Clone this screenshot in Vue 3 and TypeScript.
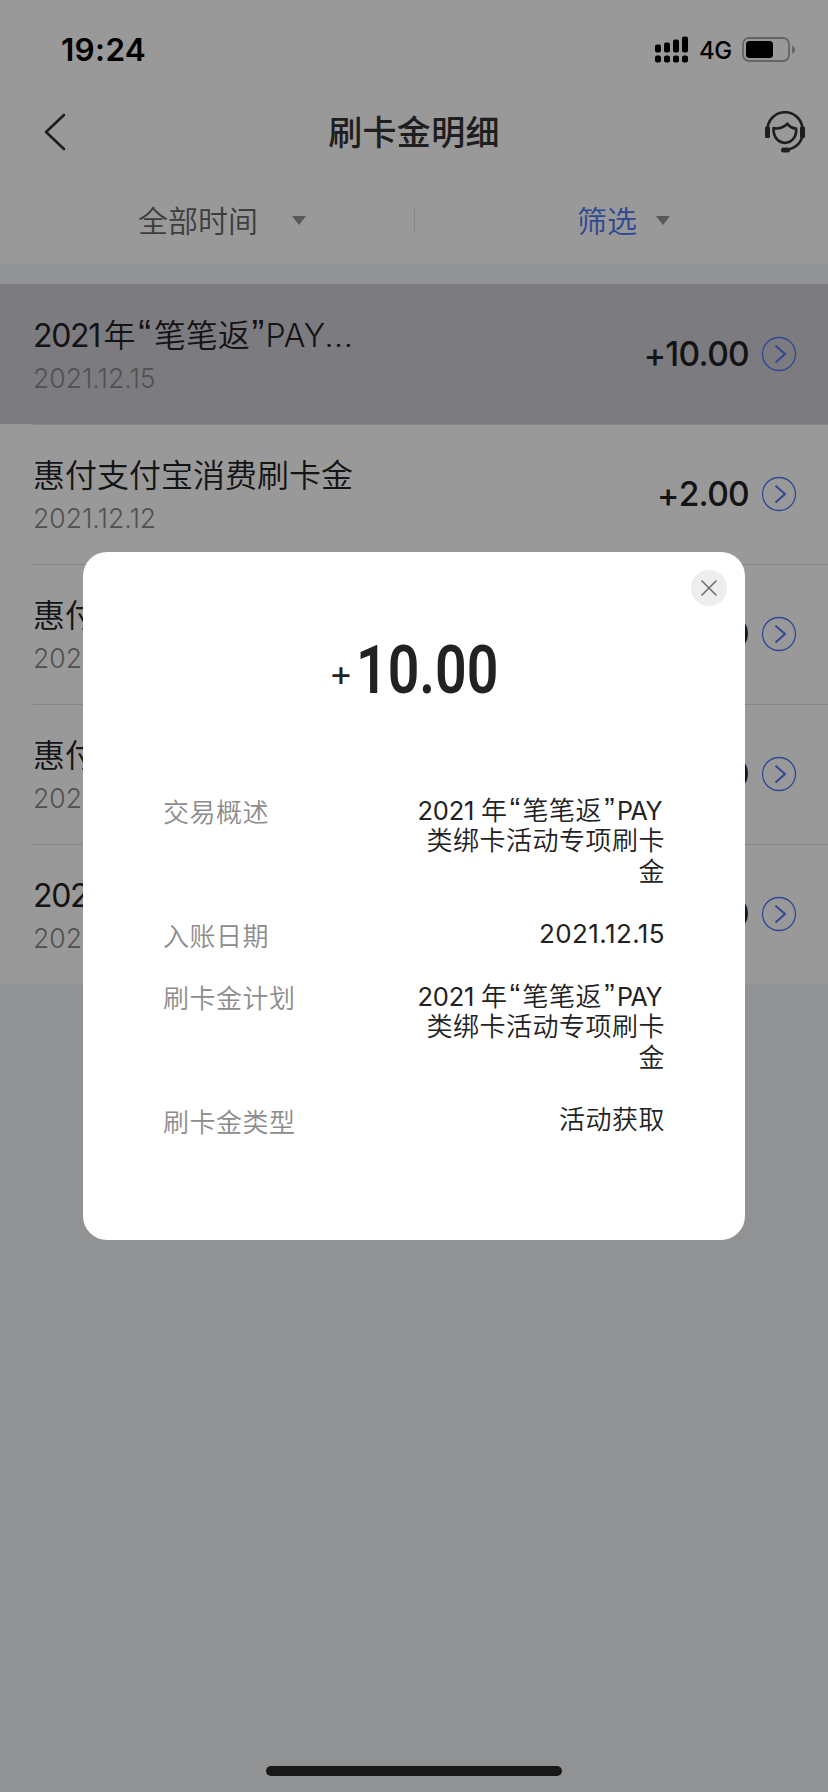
<script setup lang="ts">
interface Seg { t: string; k: 'cjk' | 'num' | 'year' | 'quote-open' | 'quote-end' | 'word' }
interface Entry { title: Seg[]; date: string; amount: string; active?: boolean }
interface Detail { label: string; lines: Seg[][] }

const cjk = (t: string): Seg => ({ t, k: 'cjk' })
const num = (t: string): Seg => ({ t, k: 'num' })
const year: Seg = { t: '2021', k: 'year' }
const campaign: Seg[] = [
  year, cjk('年'), { t: '“', k: 'quote-open' }, cjk('笔笔返'), { t: '”', k: 'quote-end' },
]

const entries: Entry[] = [
  { title: [...campaign, { t: 'PAY...', k: 'word' }], date: '2021.12.15', amount: '10.00', active: true },
  { title: [cjk('惠付支付宝消费刷卡金')], date: '2021.12.12', amount: '2.00' },
  { title: [cjk('惠付')], date: '2021', amount: '0' },
  { title: [cjk('惠付')], date: '2021', amount: '0' },
  { title: [year], date: '2021', amount: '0' },
]

const campaignLines: Seg[][] = [
  [...campaign, { t: 'PAY', k: 'word' }],
  [cjk('类绑卡活动专项刷卡')],
  [cjk('金')],
]

const details: Detail[] = [
  { label: '交易概述', lines: campaignLines },
  { label: '入账日期', lines: [[num('2021.12.15')]] },
  { label: '刷卡金计划', lines: campaignLines },
  { label: '刷卡金类型', lines: [[cjk('活动获取')]] },
]
</script>

<template>
  <div class="screen">
    <header class="top">
      <div class="status">
        <span class="clock">19:24</span>
        <div class="indicators">
          <svg class="signal" width="34" height="27" viewBox="0 0 34 27">
            <rect x="0" y="8.5" width="6" height="8" rx="2" />
            <rect x="9" y="6.5" width="6" height="10" rx="2" />
            <rect x="18" y="3.5" width="6" height="13" rx="2" />
            <rect x="27" y="0.5" width="6" height="16" rx="2" />
            <rect x="0" y="19.5" width="6" height="7" rx="2" />
            <rect x="9" y="19.5" width="6" height="7" rx="2" />
            <rect x="18" y="19.5" width="6" height="7" rx="2" />
            <rect x="27" y="19.5" width="6" height="7" rx="2" />
          </svg>
          <span class="network">4G</span>
          <svg class="battery" width="54" height="26" viewBox="0 0 54 26">
            <rect x="1" y="1" width="46" height="23" rx="6" fill="none" stroke="#a8a8a8" stroke-width="1.8" />
            <rect x="4" y="4" width="27" height="17" rx="3.5" />
            <path d="M50.2 8.5 Q53 10 53 12.7 Q53 15.500 50.2 17 Z" fill="#a0a0a0" />
          </svg>
        </div>
      </div>
      <nav class="nav">
        <svg class="back" width="24" height="40" viewBox="0 0 24 40">
          <path d="M21 3 L3 20 L21 37" fill="none" stroke="#333" stroke-width="2.6" stroke-linecap="round" stroke-linejoin="round" />
        </svg>
        <h1>刷卡金明细</h1>
        <svg class="service" width="42" height="42" viewBox="0 0 42 42">
          <g fill="none" stroke="#333" stroke-width="2.700">
            <path d="M3.500 17 A17.600 17.600 0 0 1 38.500 17" />
            <path d="M38.500 25 C36.500 33 30 38.500 21 38.700" />
            <path d="M9.600 17.200 C15 18.200 19 17 23.400 12.800 C26 16 28.500 17.200 32 17.600 C33.200 25 28 31.800 20.800 31.800 C13.600 31.800 9 25 9.600 17.200 Z" stroke-linejoin="round" />
          </g>
          <rect x="1" y="15.500" width="5" height="11.500" rx="1.500" fill="#333" />
          <rect x="36" y="15.500" width="5" height="11.500" rx="1.500" fill="#333" />
          <rect x="17" y="36.500" width="9" height="5" rx="2.500" fill="#333" />
        </svg>
      </nav>
      <div class="filters">
        <div class="filter time"><span>全部时间</span><i class="caret"></i></div>
        <div class="filter pick"><span>筛选</span><i class="caret"></i></div>
      </div>
    </header>

    <ul class="list">
      <li v-for="(e, i) in entries" :key="i" :class="{ active: e.active }">
        <div class="info">
          <div class="title"><span v-for="(s, j) in e.title" :key="j" :class="s.k">{{ s.t }}</span></div>
          <div class="date">{{ e.date }}</div>
        </div>
        <div class="amount"><span class="plus">+</span>{{ e.amount }}</div>
        <svg class="go" width="36" height="36" viewBox="0 0 36 36">
          <circle cx="18" cy="18" r="16.500" fill="none" stroke="#4f78f5" stroke-width="1.300" />
          <path d="M14.500 9.800 L24 18 L14.500 26.500" fill="none" stroke="#4f78f5" stroke-width="2" />
        </svg>
      </li>
    </ul>

    <div class="mask">
      <section class="dialog">
        <button class="dismiss" aria-label="关闭">
          <svg width="18" height="18" viewBox="0 0 18 18">
            <path d="M1.500 1.500 L16.500 16.500 M16.500 1.500 L1.500 16.500" stroke="#707070" stroke-width="1.600" />
          </svg>
        </button>
        <div class="total"><span class="total-plus">+</span><span class="total-value">10.00</span></div>
        <dl>
          <div v-for="d in details" :key="d.label" class="row">
            <dt>{{ d.label }}</dt>
            <dd>
              <div v-for="(line, i) in d.lines" :key="i"><span v-for="(s, j) in line" :key="j" :class="s.k">{{ s.t }}</span></div>
            </dd>
          </div>
        </dl>
      </section>
      <div class="home"></div>
    </div>
  </div>
</template>

<style>
html, body { margin: 0; background: #f2f4f7; }
</style>

<style scoped>
.screen {
  position: relative;
  width: 828px;
  height: 1792px;
  overflow: hidden;
  background: #f2f4f7;
  color: #222;
  font-family: Inter, "Noto Sans CJK SC", sans-serif;
}
.top { height: 264px; background: #fff; }
.status {
  display: flex;
  justify-content: space-between;
  align-items: center;
  box-sizing: border-box;
  height: 88px;
  padding: 11px 32px 0 61px;
  color: #000;
}
.clock { font-size: 31.5px; font-weight: 600; letter-spacing: 0.3px; }
.indicators { display: flex; align-items: center; }
.network { margin: 2px 10px 0 10px; font-size: 24px; font-weight: 450; letter-spacing: -0.3px; }
.nav {
  display: flex;
  justify-content: space-between;
  align-items: center;
  box-sizing: border-box;
  height: 88px;
  padding: 0 22px 0 43px;
}
.nav h1 { margin: 2px 3px 0 0; font-size: 34px; font-weight: 500; line-height: 48px; letter-spacing: 0.3px; color: #333; }
.filters { display: grid; grid-template-columns: 1fr 1fr; height: 88px; }
.filter { position: relative; display: flex; align-items: center; height: 88px; font-size: 30px; font-weight: 350; line-height: 44px; }
.filter span { position: relative; top: 1px; }
.time { padding-left: 138px; gap: 34px; color: #666; }
.time::after { content: ""; position: absolute; right: -1px; top: 32px; width: 1px; height: 24px; background: #e6e6e6; }
.pick { padding-left: 163px; gap: 19px; color: #4f78f5; font-weight: 350; }
.caret { border: 7.5px solid transparent; border-top: 9px solid #949494; border-bottom: 0; }

.list { margin: 20px 0 0; padding: 0; list-style: none; background: #fff; }
.list li {
  position: relative;
  display: flex;
  align-items: center;
  box-sizing: border-box;
  height: 140px;
  padding: 0 31px 0 33px;
}
.list li + li::before { content: ""; position: absolute; left: 33px; right: 0; top: 0; height: 1px; background: #e1e1e4; }
.list li.active { background: #cfcdd5; }
.info { flex: 1; padding-top: 3px; }
.title { height: 44px; font-size: 32px; line-height: 44px; white-space: nowrap; font-weight: 350; }
.year, .quote-open, .quote-end { display: inline-block; }
.quote-open, .quote-end { font-family: "Liberation Sans", sans-serif; font-size: 1.2em; line-height: 1; text-align: center; }
.title .year { width: 70.5px; font-weight: 400; letter-spacing: -1.3px; }
.title .quote-open { width: 18.5px; }
.title .quote-end { width: 15.5px; }
.title .word { font-weight: 350; letter-spacing: 0.6px; }
.date { font-size: 26.5px; line-height: 40px; font-weight: 350; color: #888; }
.amount { display: flex; font-size: 33.5px; font-weight: 500; line-height: 44px; letter-spacing: -0.7px; }
.plus { position: relative; top: 1px; }
.go { margin-left: 12px; }

.mask { position: absolute; inset: 0; background: rgba(0, 0, 0, 0.4); }
.dialog {
  position: absolute;
  left: 83px;
  top: 552px;
  box-sizing: border-box;
  width: 662px;
  height: 688px;
  border-radius: 24px;
  background: #fff;
}
.dismiss {
  position: absolute;
  right: 18px;
  top: 18px;
  display: flex;
  align-items: center;
  justify-content: center;
  width: 36px;
  height: 36px;
  padding: 0;
  border: 0;
  border-radius: 50%;
  background: #eee;
}
.total { display: flex; align-items: baseline; height: 78px; padding: 80px 0 0 246px; line-height: 78px; }
.total-plus { position: relative; top: -7px; font-size: 36px; font-weight: 400; }
.total-value {
  margin-left: 3px;
  font-family: Roboto, sans-serif;
  font-size: 66px;
  font-weight: 600;
  transform: scaleX(0.84);
  transform-origin: left;
}
dl { margin: 0; padding: 84px 80px 0 80px; }
.row { display: flex; justify-content: space-between; margin-bottom: 31px; font-size: 26px; line-height: 31px; letter-spacing: 0.5px; }
dt { position: relative; top: 3px; color: #8c8c8c; font-weight: 350; }
dd { margin: 0; text-align: right; white-space: nowrap; font-weight: 350; }
dd > div { height: 31px; }
dd .num { letter-spacing: 0.4px; font-weight: 400; }
dd .year { width: 63.5px; text-align: left; font-size: 25.5px; font-weight: 400; letter-spacing: -0.2px; }
dd .word { margin-right: 3px; font-size: 25px; font-weight: 400; letter-spacing: -0.5px; }
dd .quote-open, dd .quote-end { width: 15px; letter-spacing: 0; }
.home {
  position: absolute;
  left: 266px;
  bottom: 16px;
  width: 296px;
  height: 10px;
  border-radius: 5px;
  background: #181818;
}
</style>
